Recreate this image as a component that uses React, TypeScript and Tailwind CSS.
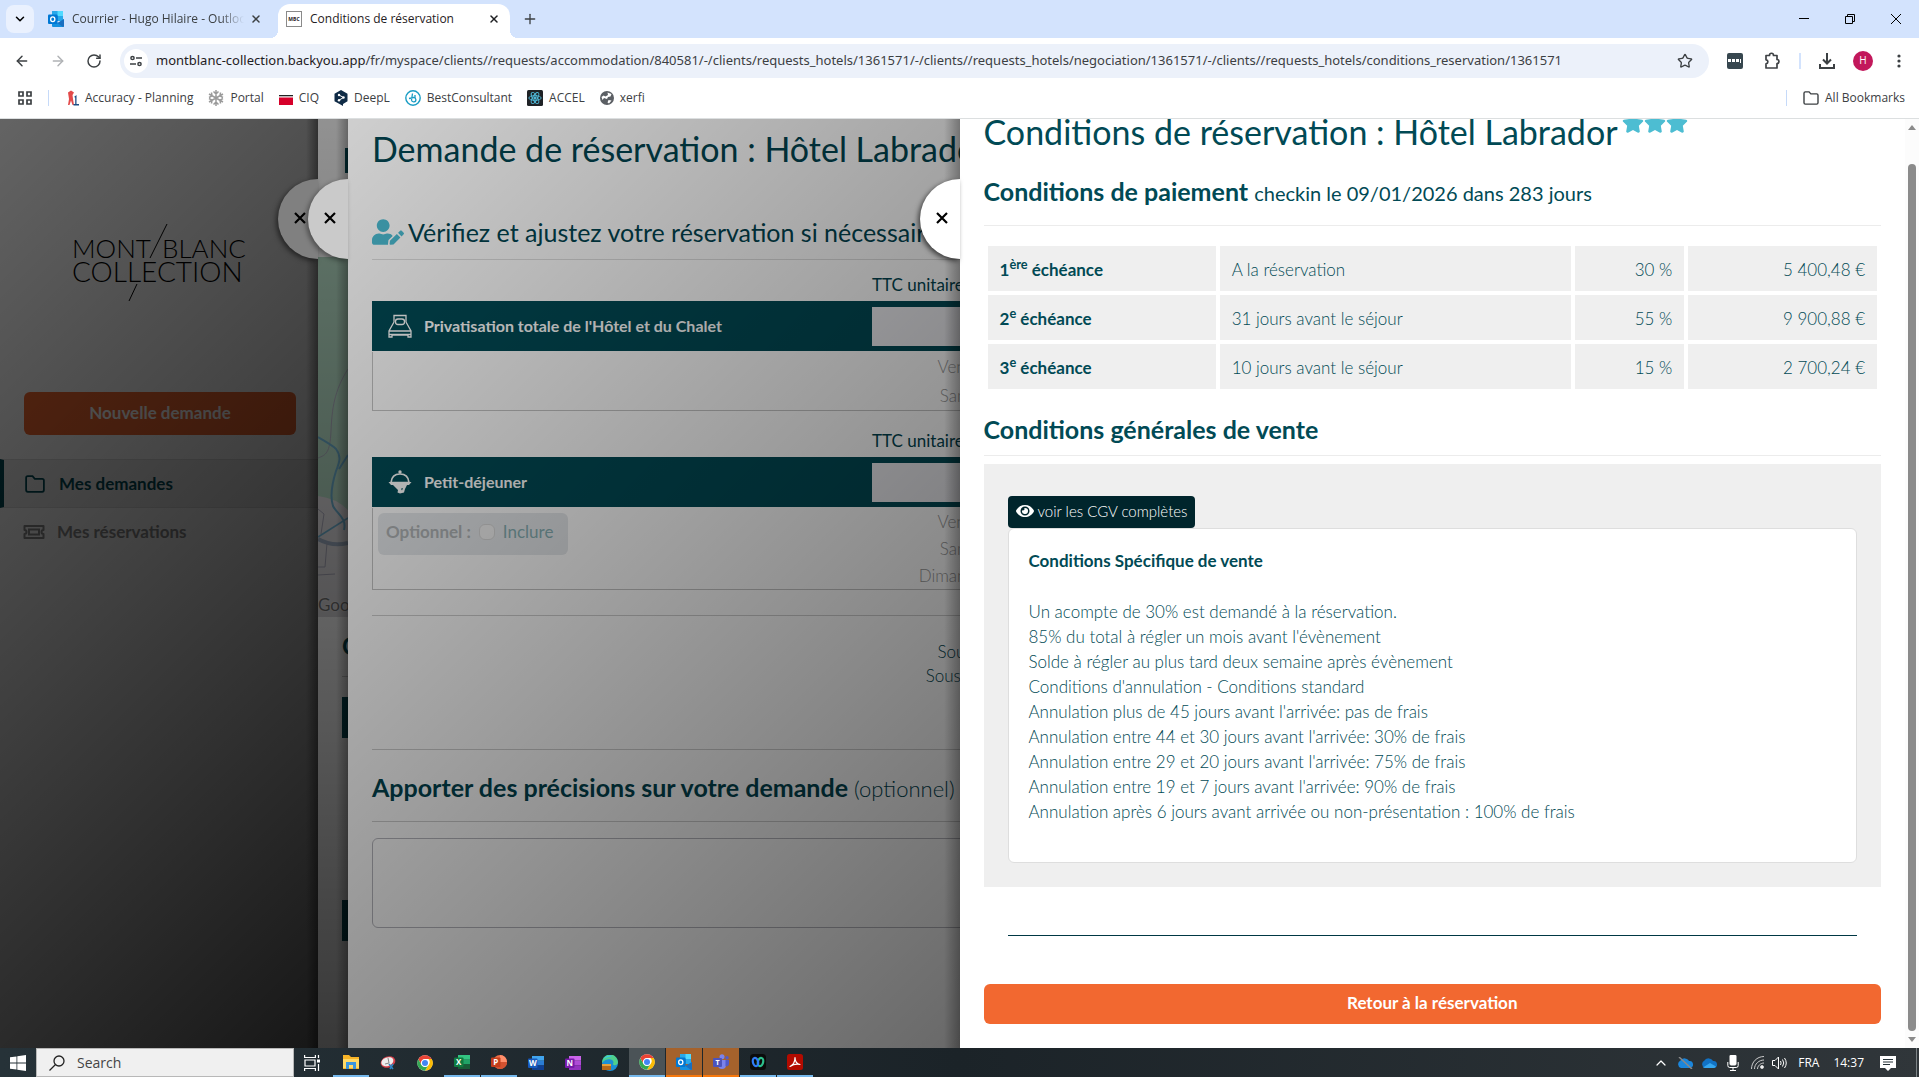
import React from "react";
import { FaEye, FaStar, FaUserEdit } from "react-icons/fa";
import {
  ArrowLeft,
  ArrowRight,
  ChevronDown,
  ChevronUp,
  Plus,
  RotateCw,
  Star,
  X,
} from "lucide-react";

type IconProps = { className?: string };

function OutlookIcon({ className }: IconProps) {
  return (
    <svg viewBox="0 0 16 16" className={className} aria-hidden="true">
      <path d="M4 0h11v10H4z" fill="#28a8ea" />
      <path d="M9.500 0H15v5H9.500z" fill="#50d9ff" />
      <path d="M4 5h5.500v5H4z" fill="#0364b8" />
      <path d="M4 8l6 4 6-4v7a1 1 0 0 1-1 1H5a1 1 0 0 1-1-1z" fill="#1490df" />
      <path d="M16 8v7a1 1 0 0 1-1 1L9.500 12z" fill="#1a6fc0" />
      <rect x="0" y="3.500" width="9.500" height="9.500" rx="1" fill="#0078d4" />
      <ellipse cx="4.750" cy="8.200" rx="2.100" ry="2.400" fill="none" stroke="#fff" strokeWidth="1.300" />
    </svg>
  );
}

function ChromeIcon({ className }: IconProps) {
  return (
    <svg viewBox="0 0 48 48" className={className} aria-hidden="true">
      <circle cx="24" cy="24" r="23" fill="#fff" />
      <path d="M24 12h20A23 23 0 0 0 4 12.500L13.600 30A12 12 0 0 1 24 12z" fill="#ea4335" />
      <path d="M44 12A23 23 0 0 1 24 47l10.400-17A12 12 0 0 0 34 12z" fill="#fbbc05" />
      <path d="M4 12.500A23 23 0 0 0 24 47l10.400-17a12 12 0 0 1-20.800 0z" fill="#34a853" />
      <circle cx="24" cy="24" r="11.500" fill="#fff" />
      <circle cx="24" cy="24" r="9" fill="#4285f4" />
    </svg>
  );
}

function OfficeIcon({
  letter,
  tile,
  light,
  mid,
  dark,
  round,
  className,
}: IconProps & { letter: string; tile: string; light: string; mid: string; dark: string; round?: boolean }) {
  return (
    <svg viewBox="0 0 16 16" className={className} aria-hidden="true">
      {round ? (
        <>
          <circle cx="9" cy="8" r="7" fill={mid} />
          <path d="M9 1a7 7 0 0 1 7 7H9z" fill={light} />
          <path d="M2 8h14a7 7 0 0 1-14 0z" fill={dark} />
        </>
      ) : (
        <>
          <path d="M4 1h12v4.700H4z" fill={light} />
          <path d="M4 5.700h12v4.700H4z" fill={mid} />
          <path d="M4 10.300h12V15H4z" fill={dark} />
        </>
      )}
      <rect x="0" y="3.500" width="9.500" height="9.500" rx="1" fill={tile} />
      <text x="4.750" y="11" textAnchor="middle" fontSize="8" fontWeight="700" fill="#fff" fontFamily="Open Sans">
        {letter}
      </text>
    </svg>
  );
}

function PuzzleIcon({ className }: IconProps) {
  return (
    <svg viewBox="0 0 18 18" className={className} fill="none" stroke="#3f4246" strokeWidth="1.700" aria-hidden="true">
      <path d="M3 3.500h3.500c0-3 4-3 4 0H14v4c2.600 0 2.600 4 0 4v4.500H3v-4.200c2.500-.300 2.500-3.700 0-4z" strokeLinejoin="round" />
    </svg>
  );
}

function FolderIcon({ className }: IconProps) {
  return (
    <svg viewBox="0 0 18 16" className={className} fill="none" stroke="currentColor" strokeWidth="1.600" aria-hidden="true">
      <path d="M1 2.500A1.500 1.500 0 0 1 2.500 1h4.300l2 2.300h6.700A1.500 1.500 0 0 1 17 4.800v8.700a1.500 1.500 0 0 1-1.500 1.500h-13A1.500 1.500 0 0 1 1 13.500z" />
    </svg>
  );
}

function TicketIcon({ className }: IconProps) {
  return (
    <svg viewBox="0 0 22 16" className={className} fill="none" stroke="currentColor" strokeWidth="2" aria-hidden="true">
      <path d="M1.500 2h19v4a2 2 0 0 0 0 4v4h-19v-4a2 2 0 0 0 0-4z" strokeLinejoin="round" />
      <rect x="6" y="5.500" width="10" height="5" />
    </svg>
  );
}

function BedIcon({ className }: IconProps) {
  return (
    <svg viewBox="0 0 24 24" className={className} fill="none" stroke="#fff" strokeWidth="1.300" aria-hidden="true">
      <path d="M6 8V1.500h12V8M6 8L1 17v6h3v-2h16v2h3v-6l-5-9M1.200 17h21.600M1.200 20.500h21.600" />
      <rect x="7.500" y="5" width="9" height="5.500" rx="2.500" />
    </svg>
  );
}

function MealIcon({ className }: IconProps) {
  return (
    <svg viewBox="0 0 24 24" className={className} aria-hidden="true">
      <circle cx="12" cy="2" r="1.700" fill="#fff" />
      <path d="M3 12.500C3.500 7 7 4 12 4s8.500 3 9 8.500z" fill="none" stroke="#fff" strokeWidth="1.700" />
      <path d="M.500 12h23l-2.500 3H3z" fill="#fff" />
      <path d="M5 15h14l-2 4-1 3.500-4 1-2.500-1 .500-2.500z" fill="#fff" />
      <path d="M12 17l1 1.800 2-.800-1 2.500z" fill="#014a55" />
    </svg>
  );
}

const BOOKMARKS: { label: string; icon: React.ReactNode }[] = [
  {
    label: "Accuracy - Planning",
    icon: (
      <svg viewBox="0 0 12 16" className="h-4 w-3" aria-hidden="true">
        <path d="M1 2.500L4 .500 7 2.500 5.500 5 6 9l1 6H5.500L4 10.500 2.500 15H1L2 9z" fill="#e34a4a" />
        <path d="M7 7l2.500-2v9H12v1.500H6.500V14h1.700V7.500z" fill="#1c4f86" />
      </svg>
    ),
  },
  {
    label: "Portal",
    icon: (
      <svg viewBox="0 0 16 16" className="size-4" fill="none" stroke="#9a9a9a" strokeWidth="1.500" aria-hidden="true">
        <path d="M8 0v16M1 4l14 8M1 12l14-8M5.500 1.500L8 4l2.500-2.500M5.500 14.500L8 12l2.500 2.500M1 7.500l3-1.700L3.500 2.500M15 7.500l-3-1.700.500-3.300M1 8.500l3 1.700-.500 3.300M15 8.500l-3 1.700.500 3.300" />
      </svg>
    ),
  },
  {
    label: "CIQ",
    icon: (
      <svg viewBox="0 0 14 16" className="h-4 w-3.5" aria-hidden="true">
        <path d="M0 5h14v1.300H0z" fill="#222" />
        <path d="M0 7.500h14V15H0z" fill="#d6002a" />
      </svg>
    ),
  },
  {
    label: "DeepL",
    icon: (
      <svg viewBox="0 0 14 16" className="h-4 w-3.5" aria-hidden="true">
        <path d="M7 0l6.500 3.700v7.500L9 14v2l-3-1.800L.500 11.200V3.700z" fill="#0f2b46" />
        <path d="M5 5l4.500 2.500L5 10.200" fill="none" stroke="#fff" />
        <circle cx="5" cy="5" r="1.200" fill="#fff" />
        <circle cx="9.500" cy="7.500" r="1.200" fill="#fff" />
        <circle cx="5" cy="10.200" r="1.200" fill="#fff" />
      </svg>
    ),
  },
  {
    label: "BestConsultant",
    icon: (
      <svg viewBox="0 0 16 16" className="size-4" fill="none" stroke="#1a9dc4" aria-hidden="true">
        <circle cx="8" cy="8" r="7.200" strokeWidth="1.400" />
        <path d="M7.500 3.500L6.500 10a2.200 2.200 0 1 0 2-2.500L4 8.500M10 5v3" strokeWidth="1.300" />
      </svg>
    ),
  },
  {
    label: "ACCEL",
    icon: (
      <svg viewBox="0 0 16 16" className="size-4" fill="none" stroke="#4fb8d8" strokeWidth=".9" aria-hidden="true">
        <rect width="16" height="16" rx="1.500" fill="#1f2226" stroke="none" />
        <ellipse cx="8" cy="8" rx="6.200" ry="2.400" />
        <ellipse cx="8" cy="8" rx="6.200" ry="2.400" transform="rotate(60 8 8)" />
        <ellipse cx="8" cy="8" rx="6.200" ry="2.400" transform="rotate(120 8 8)" />
        <circle cx="8" cy="8" r="1.200" fill="#4fb8d8" />
      </svg>
    ),
  },
  {
    label: "xerfi",
    icon: (
      <svg viewBox="0 0 14 14" className="size-3.5" aria-hidden="true">
        <circle cx="7" cy="7" r="7" fill="#5b5f64" />
        <path d="M7.500 1.500l4 1.500-1 2.500-2.500.500-1 2-3-1L2.500 9 1.500 6l2-1.500 2 1L8 4zM8.500 9l3 .500-2.500 3-1.500-1z" fill="#fff" />
      </svg>
    ),
  },
];

function BrowserChrome() {
  return (
    <header className="shrink-0 bg-white font-['Open_Sans',sans-serif] text-xs text-[#3c4043]">
      <div className="flex h-[38px] items-center bg-[#d3e3fd] pl-1.5">
        <button aria-label="Rechercher dans les onglets" className="mr-3.5 flex size-7 items-center justify-center rounded-lg bg-[#eaf1fe] text-black">
          <ChevronDown className="size-3.5" strokeWidth={2.600} />
        </button>
        <div className="flex w-[230px] items-center">
          <OutlookIcon className="size-4 shrink-0" />
          <span className="ml-2 w-[172px] overflow-hidden whitespace-nowrap [mask-image:linear-gradient(to_right,black_86%,transparent)]">
            Courrier - Hugo Hilaire - Outlook
          </span>
          <button aria-label="Fermer l'onglet" className="ml-1.5">
            <X className="size-3" strokeWidth={3} />
          </button>
        </div>
        <div className="relative mt-1 flex h-[34px] w-[232px] items-center rounded-t-xl bg-white pb-1 pl-2 text-[#1f2023]">
          <span className="absolute bottom-0 -left-2 size-2 bg-[radial-gradient(circle_at_0_0,transparent_8px,white_8px)]" />
          <span className="absolute -right-2 bottom-0 size-2 bg-[radial-gradient(circle_at_100%_0,transparent_8px,white_8px)]" />
          <span className="flex size-4 items-center justify-center border border-[#8a8a8a] text-[5px] font-bold">MBC</span>
          <span className="ml-2 flex-1 whitespace-nowrap">Conditions de réservation</span>
          <button aria-label="Fermer l'onglet" className="mr-2.5">
            <X className="size-3" strokeWidth={3} />
          </button>
        </div>
        <button aria-label="Nouvel onglet" className="ml-3">
          <Plus className="size-4" strokeWidth={2} />
        </button>
        <div className="ml-auto flex items-center gap-9 pr-4.5 text-black">
          <button aria-label="Réduire">
            <svg viewBox="0 0 10 10" className="size-2.5" stroke="currentColor"><path d="M0 4.500h10" /></svg>
          </button>
          <button aria-label="Restaurer">
            <svg viewBox="0 0 10 10" className="size-2.5" fill="none" stroke="currentColor"><path d="M.500 2.500h7v7h-7zM2.500 2.500v-2h7v7h-2" /></svg>
          </button>
          <button aria-label="Fermer">
            <svg viewBox="0 0 10 10" className="size-2.5" stroke="currentColor"><path d="M0 0l10 10M10 0L0 10" /></svg>
          </button>
        </div>
      </div>

      <div className="flex h-10 items-center pt-1.5 pl-3.5">
        <button aria-label="Précédent"><ArrowLeft className="size-4" strokeWidth={2.200} /></button>
        <button aria-label="Suivant" className="ml-5 text-[#b0b2b5]"><ArrowRight className="size-4" strokeWidth={2.200} /></button>
        <button aria-label="Actualiser" className="ml-5"><RotateCw className="size-4" strokeWidth={2.200} /></button>
        <div className="ml-4.5 flex h-[34px] min-w-0 flex-1 items-center rounded-full bg-[#ecf1fa] pr-4 pl-1">
          <button aria-label="Informations sur le site" className="flex size-6 items-center justify-center rounded-full bg-white">
            <svg viewBox="0 0 12 12" className="size-3" fill="none" stroke="#3c4043" strokeWidth="1.500"><circle cx="2.500" cy="3" r="1.600" /><path d="M6 3h6M0 9h6" /><circle cx="9.500" cy="9" r="1.600" /></svg>
          </button>
          <p className="ml-2 min-w-0 flex-1 overflow-hidden font-['Noto_Sans',sans-serif] text-[13px] whitespace-nowrap">
            <span className="text-[#1f2023]">montblanc-collection.backyou.app</span>
            /fr/myspace/clients//requests/accommodation/840581/-/clients/requests_hotels/1361571/-/clients//requests_hotels/negociation/1361571/-/clients//requests_hotels/conditions_reservation/1361571
          </p>
          <button aria-label="Ajouter aux favoris"><Star className="size-4" strokeWidth={2} /></button>
        </div>
        <div className="flex items-center pr-4.5 pl-4.5">
          <button aria-label="Mots de passe" className="flex h-4 w-4 items-center justify-center rounded-xs bg-[#37474f]">
            <svg viewBox="0 0 14 4" className="h-1 w-3.5" fill="#fff"><path d="M0 0h3v3H0zM4 0h3v3H4zM8 0h3v3H8zM12 0h1v4h-1z" /></svg>
          </button>
          <button aria-label="Extensions" className="ml-5"><PuzzleIcon className="size-4.5" /></button>
          <span className="mx-4.5 h-4 w-0.5 bg-[#d3e3fd]" />
          <button aria-label="Téléchargements">
            <svg viewBox="0 0 16 16" className="size-4" fill="none" stroke="currentColor" strokeWidth="2"><path d="M8 0v10M4 6.500l4 4 4-4M1 11v4h14v-4" /></svg>
          </button>
          <button aria-label="Profil" className="ml-4.5 flex size-5 items-center justify-center rounded-full bg-[#c2185b] text-[10px] text-white">H</button>
          <button aria-label="Menu" className="ml-6">
            <svg viewBox="0 0 4 14" className="h-3.5 w-1" fill="currentColor"><circle cx="2" cy="2" r="1.600" /><circle cx="2" cy="7" r="1.600" /><circle cx="2" cy="12" r="1.600" /></svg>
          </button>
        </div>
      </div>

      <nav className="flex h-[41px] items-center border-b border-[#dcdfe0] pl-4.5">
        <button aria-label="Applications">
          <svg viewBox="0 0 14 14" className="size-3.5" fill="none" stroke="currentColor" strokeWidth="1.700"><path d="M1 1h4v4H1zM9 1h4v4H9zM1 9h4v4H1zM9 9h4v4H9z" /></svg>
        </button>
        <span className="mr-4.5 ml-4 h-4 w-px bg-[#c6daf9]" />
        <div className="flex gap-[15px]">
          {BOOKMARKS.map((b) => (
            <a key={b.label} href="#" className="flex items-center gap-1.5 whitespace-nowrap">
              {b.icon}
              {b.label}
            </a>
          ))}
        </div>
        <a href="#" className="ml-auto flex items-center gap-1.5 border-l border-[#c6daf9] pr-3.5 pl-4 whitespace-nowrap">
          <FolderIcon className="h-3.5 w-4" />
          All Bookmarks
        </a>
      </nav>
    </header>
  );
}

function PanelHandle({ className }: { className: string }) {
  return (
    <button
      aria-label="Fermer le panneau"
      className={"absolute top-[60px] right-full flex h-20 w-10 items-center justify-end rounded-l-full pr-3 pb-0.5 text-black " + className}
    >
      <svg viewBox="0 0 12 12" className="size-3" stroke="currentColor" strokeWidth="2.200" aria-hidden="true"><path d="M1 1l10 10M11 1L1 11" /></svg>
    </button>
  );
}

function Sidebar() {
  return (
    <aside className="relative w-[318px] shrink-0 overflow-hidden bg-white text-[17px]">
      <svg viewBox="0 0 180 80" className="mt-[103px] ml-[70px] h-20 w-[180px]" role="img" aria-label="Mont/Blanc Collection">
        <g fontFamily="Lato" fontWeight="300" fill="#000">
          <text x="2" y="36" fontSize="26">MONT</text>
          <text x="92" y="36" fontSize="26">BLANC</text>
          <text x="2" y="60" fontSize="28">COLLECTION</text>
        </g>
        <path d="M97 2L80 36M67 62l-8 17" stroke="#000" strokeWidth="1" />
      </svg>
      <button className="mx-6 mt-[90px] block h-[43px] w-[272px] rounded-md bg-[#f26830] pb-0.5 font-bold text-white">Nouvelle demande</button>
      <nav className="mt-6">
        <a href="#" className="flex h-[49px] items-center border-y border-l-4 border-y-[#ddd] border-l-[#014a55] bg-[#ececec] pl-[21px] font-bold text-[#014a55]">
          <FolderIcon className="mr-3.5 h-[18px] w-5" />
          Mes demandes
        </a>
        <a href="#" className="flex h-12 items-center pl-[23px] font-bold text-[#8c8c8c]">
          <TicketIcon className="mr-3 h-4 w-[22px]" />
          Mes réservations
        </a>
      </nav>
      <div className="pointer-events-none absolute inset-0 bg-linear-135 from-black/61 to-black/91" />
      <div className="pointer-events-none absolute inset-y-0 right-0 w-3 bg-linear-to-r from-transparent to-black/40" />
    </aside>
  );
}

function MapPanel() {
  return (
    <section aria-label="Carte" className="relative w-[30px] shrink-0 bg-white">
      <div className="relative flex h-full flex-col items-end overflow-hidden">
        <div className="mt-[29px] h-[25px] w-[3px] bg-[#014a55]" />
        <svg viewBox="0 0 30 360" className="mt-[84px] h-[360px] w-[30px] shrink-0" fill="none" aria-hidden="true">
          <path d="M0 0h30v360H0z" fill="#dcdadd" />
          <path d="M0 0h30v253q-12-12-30-14z" fill="#b0d6c0" />
          <path d="M30 112c-14 22-16 40-17 62s-5 24-13 27" stroke="#a8a8b8" />
          <path d="M0 180c8 5 14 8 18 12 6 8 3 14 0 22-5 16-6 26-3 35 4 8 14 12 11 24M30 198l-9 14" stroke="#6aaccb" strokeWidth="2" />
          <path d="M0 280l30-19" stroke="#6aaccb" strokeWidth="1.500" />
          <path d="M0 282q14 8 30 4" stroke="#9aa9bd" strokeWidth="4" />
          <path d="M0 252l6 5-3 20M9 286l-2 24H0M0 318l17-1" stroke="#a5a5b5" />
        </svg>
        <span className="-mt-6 w-full text-[17px] leading-6 whitespace-nowrap text-[#777] [text-shadow:0_0_2px_#fff]">Google</span>
        <span className="mt-[13px] w-1.5 overflow-hidden text-2xl leading-8 font-bold text-[#014a55]">C</span>
        <div className="mt-3.5 h-px w-1.5 bg-[#ccc]" />
        <div className="mt-5 h-[41px] w-1.5 bg-[#014a55]" />
        <div className="mt-[162px] h-[41px] w-1.5 bg-[#014a55]" />
      </div>
      <div className="pointer-events-none absolute inset-0 bg-linear-to-b from-black/43 to-black/78" />
      <div className="pointer-events-none absolute inset-y-0 right-0 w-3 bg-linear-to-r from-transparent to-black/30" />
      <PanelHandle className="bg-[#808080] shadow-[-2px_2px_5px_rgba(0,0,0,0.5)]" />
    </section>
  );
}

function ServiceBlock({
  title,
  icon,
  days,
  rowClass,
  children,
}: {
  title: string;
  icon: React.ReactNode;
  days: string[];
  rowClass: string;
  children?: React.ReactNode;
}) {
  return (
    <div>
      <div className="pl-[500px] leading-[25px]">TTC unitaire</div>
      <div className="mt-1 flex h-[50px] items-center bg-[#014a55] pl-4 text-base font-bold text-white">
        {icon}
        <span className="ml-3 w-[448px]">{title}</span>
        <input aria-label={"Prix TTC unitaire " + title} className="h-[39px] w-[200px] bg-[#ececf0]" />
      </div>
      <div className="mt-px flex justify-between border-b border-l border-[#c4c4c4]">
        <div className="flex-1">{children}</div>
        <div className="mr-[105px] text-right font-light text-[#999]">
          {days.map((d) => (
            <div key={d} className={rowClass}>{d}</div>
          ))}
        </div>
      </div>
    </div>
  );
}

function RequestPanel() {
  return (
    <section className="relative min-w-0 flex-1 bg-white">
      <div className="h-full overflow-hidden pt-2.5 pl-6 text-[17px] text-[#014450]">
        <div className="w-[750px]">
          <h1 className="text-[34px] leading-10 whitespace-nowrap">Demande de réservation : Hôtel Labrador</h1>
          <h2 className="mt-[47px] flex items-center gap-1 border-b border-[#dedede] pb-[11px] text-[25px] leading-8 whitespace-nowrap">
            <FaUserEdit className="size-8 text-[#4bbad0]" />
            Vérifiez et ajustez votre réservation si nécessaire
          </h2>
          <div className="mt-3 flex flex-col gap-[17px]">
            <ServiceBlock title="Privatisation totale de l'Hôtel et du Chalet" icon={<BedIcon className="size-6" />} days={["Vendredi 9", "Samedi 10"]} rowClass="h-[29px] leading-[29px]" />
            <ServiceBlock title="Petit-déjeuner" icon={<MealIcon className="size-6" />} days={["Vendredi 9", "Samedi 10", "Dimanche 11"]} rowClass="h-[27px] leading-[27px]">
              <label className="mt-[5px] ml-[5px] flex h-[42px] w-[190px] items-center rounded-md bg-[#e6e9ec] pb-1 pl-2 text-[#86b0b4]">
                <span className="font-bold text-[#b0b4b6]">Optionnel :</span>
                <input type="checkbox" className="mx-2 size-4 appearance-none rounded-md border border-[#d8d8d8] bg-[#f4f4f4]" />
                Inclure
              </label>
            </ServiceBlock>
          </div>
          <div className="mt-[25px] border-t border-[#cfcfcf] pt-6 pr-[83px] pb-[61px] text-right leading-6 font-light">
            <div>Sous-total HT</div>
            <div>Sous-total T.T.C</div>
          </div>
          <h2 className="border-y border-[#cfcfcf] pt-[21px] pb-4 text-[25px] leading-8 font-bold whitespace-nowrap">
            <label htmlFor="precisions">
              Apporter des précisions sur votre demande <span className="text-[22px] font-light">(optionnel)</span>
            </label>
          </h2>
          <textarea id="precisions" className="mt-4 block h-[90px] w-full resize-none rounded-md border border-[#b9b9c0] bg-transparent" />
        </div>
      </div>
      <div className="pointer-events-none absolute inset-0 bg-linear-135 from-black/19 to-black/59" />
      <div className="pointer-events-none absolute inset-y-0 right-0 w-4 bg-linear-to-r from-transparent to-black/30" />
      <PanelHandle className="bg-[#cacaca] shadow-[-2px_2px_5px_rgba(0,0,0,0.4)]" />
    </section>
  );
}

const PAYMENTS = [
  { rank: "1", suffix: "ère", when: "A la réservation", share: "30 %", amount: "5 400,48 €" },
  { rank: "2", suffix: "e", when: "31 jours avant le séjour", share: "55 %", amount: "9 900,88 €" },
  { rank: "3", suffix: "e", when: "10 jours avant le séjour", share: "15 %", amount: "2 700,24 €" },
];

const TERMS = [
  "Un acompte de 30% est demandé à la réservation.",
  "85% du total à régler un mois avant l'évènement",
  "Solde à régler au plus tard deux semaine après évènement",
  "Conditions d'annulation - Conditions standard",
  "Annulation plus de 45 jours avant l'arrivée: pas de frais",
  "Annulation entre 44 et 30 jours avant l'arrivée: 30% de frais",
  "Annulation entre 29 et 20 jours avant l'arrivée: 75% de frais",
  "Annulation entre 19 et 7 jours avant l'arrivée: 90% de frais",
  "Annulation après 6 jours avant arrivée ou non-présentation : 100% de frais",
];

function ConditionsDrawer() {
  return (
    <section className="relative flex w-1/2 shrink-0 bg-white">
      <PanelHandle className="bg-white shadow-[-2px_2px_5px_rgba(0,0,0,0.6)]" />
      <div className="h-full min-w-0 flex-1 overflow-hidden px-6 text-[17px] text-[#014a55]">
        <h1 className="flex h-[26px] items-center pb-0.5 text-[34px] whitespace-nowrap">
          Conditions de réservation : Hôtel Labrador
          <span className="mb-4 ml-1 flex text-[#4dbdd2]" role="img" aria-label="3 étoiles">
            <FaStar className="size-[22px]" />
            <FaStar className="size-[22px]" />
            <FaStar className="size-[22px]" />
          </span>
        </h1>
        <h2 className="mt-[30px] border-b border-[#ececec] pb-[18px] text-[25px] leading-8 font-bold">
          Conditions de paiement <span className="text-xl font-normal">checkin le 09/01/2026 dans 283 jours</span>
        </h2>
        <table className="mt-4 w-full table-fixed border-separate border-spacing-1">
          <tbody>
            {PAYMENTS.map((p) => (
              <tr key={p.rank} className="h-[45px] *:bg-[#efefef] *:px-3 *:pt-0.5">
                <th scope="row" className="w-[26%] text-left font-bold">
                  {p.rank}
                  <sup>{p.suffix}</sup> échéance
                </th>
                <td className="w-2/5 font-light">{p.when}</td>
                <td className="w-1/8 text-right font-light">{p.share}</td>
                <td className="text-right font-light">{p.amount}</td>
              </tr>
            ))}
          </tbody>
        </table>
        <h2 className="mt-5 border-b border-[#ececec] pb-2.5 text-[25px] leading-8 font-bold">Conditions générales de vente</h2>
        <div className="mt-2 bg-[#efefef] px-6 pt-8 pb-6">
          <button className="flex h-8 items-center gap-1 rounded bg-[#00252c] px-2 pb-0.5 text-[15px] font-light whitespace-nowrap text-white">
            <FaEye className="size-[18px]" />
            voir les CGV complètes
          </button>
          <div className="rounded-md border border-[#dedede] bg-white px-5 pt-[19px] pb-[38px] leading-[25px] font-light">
            <p className="mb-[26px] font-bold">Conditions Spécifique de vente</p>
            {TERMS.map((t) => (
              <p key={t}>{t}</p>
            ))}
          </div>
        </div>
        <hr className="mx-6 mt-12 border-[#003844]" />
        <button className="mt-12 h-10 w-full rounded-md bg-[#f26830] pb-0.5 font-bold text-white">Retour à la réservation</button>
      </div>
      <div className="flex w-3.5 shrink-0 flex-col items-center bg-[#fcfcfc] py-1.5" aria-hidden="true">
        <svg viewBox="0 0 8 5" className="h-[5px] w-2" fill="#8b8b8b"><path d="M4 0l4 5H0z" /></svg>
        <div className="mt-[34px] mb-1.5 w-2 flex-1 rounded-full bg-[#8b8b8b]" />
        <svg viewBox="0 0 8 5" className="h-[5px] w-2" fill="#8b8b8b"><path d="M4 5L0 0h8z" /></svg>
      </div>
    </section>
  );
}

const TASKS: { name: string; tile: string; icon: React.ReactNode }[] = [
  {
    name: "Explorateur",
    tile: "border-b-2 border-[#76b9ed]",
    icon: (
      <svg viewBox="0 0 16 16" className="size-4"><path d="M0 1h6l2 2h8v12H0z" fill="#f8b427" /><path d="M0 5h16v9H0z" fill="#ffd965" /><path d="M3 8h10v7h-3v-4H6v4H3z" fill="#3a95dd" /></svg>
    ),
  },
  {
    name: "Capture",
    tile: "",
    icon: (
      <svg viewBox="0 0 16 16" className="size-4"><ellipse cx="8" cy="7" rx="7.500" ry="5.500" fill="#d8404a" transform="rotate(-20 8 7)" /><ellipse cx="7.500" cy="6.500" rx="6.200" ry="4.300" fill="#eee" transform="rotate(-20 8 7)" /><path d="M8 3l1 5-4 1" stroke="#888" fill="none" /><path d="M9 9l4 5M13 9l-3 5" stroke="#2c86c7" strokeWidth="1.500" /></svg>
    ),
  },
  { name: "Chrome", tile: "", icon: <ChromeIcon className="size-4" /> },
  { name: "Excel", tile: "border-b-2 border-[#76b9ed]", icon: <OfficeIcon className="size-4" letter="X" tile="#107c41" light="#33c481" mid="#21a366" dark="#185c37" /> },
  { name: "PowerPoint", tile: "border-b-2 border-[#76b9ed]", icon: <OfficeIcon className="size-4" round letter="P" tile="#c43e1c" light="#ff8f6b" mid="#ed6c47" dark="#d35230" /> },
  { name: "Word", tile: "", icon: <OfficeIcon className="size-4" letter="W" tile="#185abd" light="#41a5ee" mid="#2b7cd3" dark="#103f91" /> },
  { name: "OneNote", tile: "", icon: <OfficeIcon className="size-4" letter="N" tile="#7719aa" light="#ca64ea" mid="#ae4bd5" dark="#9332bf" /> },
  {
    name: "Edge",
    tile: "",
    icon: (
      <svg viewBox="0 0 16 16" className="size-4"><circle cx="8" cy="8" r="8" fill="#1b8fd6" /><path d="M0 8a8 8 0 0 1 16-1c0 4-5 4-5 2 0-1 1-1 0-3S4 3 0 8z" fill="#4fd08c" /><path d="M1 5a8 8 0 0 1 10-4c-3 1-8 1-10 4z" fill="#3cc5e8" /><rect x="0" y="9" width="9" height="6" fill="#b5691a" /><path d="M0 9h9v2H0z" fill="#e6a13c" /></svg>
    ),
  },
  { name: "Chrome (actif)", tile: "bg-[#4b5357] border-b-2 border-[#76b9ed]", icon: <ChromeIcon className="size-4" /> },
  { name: "Outlook", tile: "bg-[#a5622c] border-b-2 border-[#f7780c]", icon: <OutlookIcon className="size-4" /> },
  {
    name: "Teams",
    tile: "bg-[#a5622c] border-b-2 border-[#f7780c]",
    icon: (
      <svg viewBox="0 0 16 16" className="size-4"><circle cx="9" cy="2.800" r="2.500" fill="#7b83eb" /><circle cx="14" cy="3.800" r="1.700" fill="#5059c9" /><path d="M5 6h8v5a4 4 0 0 1-8 0z" fill="#7b83eb" /><path d="M12.500 6H16v4a2.500 2.500 0 0 1-3.500 2z" fill="#5059c9" /><rect y="4" width="9" height="9" rx="1" fill="#4b53bc" /><text x="4.500" y="11" textAnchor="middle" fontSize="7" fontWeight="700" fill="#fff" fontFamily="Open Sans">T</text></svg>
    ),
  },
  {
    name: "Webex",
    tile: "border-b-2 border-[#76b9ed]",
    icon: (
      <svg viewBox="0 0 16 16" className="size-4" fill="none" strokeWidth="2.200"><rect width="16" height="16" rx="3.500" fill="#0b0b0b" /><ellipse cx="10.500" cy="8" rx="2.600" ry="4.200" stroke="#2cc08c" transform="rotate(15 10.500 8)" /><ellipse cx="5.500" cy="8" rx="2.600" ry="4.200" stroke="#2f7df6" transform="rotate(-15 5.500 8)" /></svg>
    ),
  },
  {
    name: "Acrobat",
    tile: "border-b-2 border-[#76b9ed]",
    icon: (
      <svg viewBox="0 0 16 16" className="size-4"><rect width="16" height="16" rx="2.500" fill="#b30b00" /><path d="M3 12.500c3-1.500 5-5.500 5-9 0 4 2.500 6.500 5 7-3.500-.800-7 0-10 2z" fill="none" stroke="#fff" strokeWidth="1.200" strokeLinejoin="round" /></svg>
    ),
  },
];

function Taskbar() {
  return (
    <footer className="flex h-[29px] shrink-0 items-stretch bg-linear-to-r from-[#263238] via-[#1b2328] to-[#30363a] font-['Open_Sans',sans-serif] text-xs text-white">
      <button aria-label="Démarrer" className="flex w-9 items-center justify-center">
        <svg viewBox="0 0 16 16" className="size-4" fill="#fff"><path d="M0 2.300L6.500 1.400v6.100H0zM7.300 1.300L16 0v7.500H7.300zM0 8.400h6.500v6.200L0 13.700zM7.300 8.400H16V16l-8.700-1.300z" /></svg>
      </button>
      <label className="flex w-[258px] items-center border border-[#b8b8b8] bg-[#f0f0f0] pl-3 text-[#333]">
        <svg viewBox="0 0 16 16" className="size-4" fill="none" stroke="#222" strokeWidth="1.300"><circle cx="10" cy="6" r="5" /><path d="M6.500 9.500L.500 15.500" /></svg>
        <input aria-label="Search" placeholder="Search" className="ml-3 w-40 bg-transparent text-sm placeholder:text-[#444]" />
      </label>
      <button aria-label="Affichage des tâches" className="flex w-9 items-center justify-center">
        <svg viewBox="0 0 16 16" className="size-4" fill="none" stroke="#fff" strokeWidth="1.200"><path d="M.600 0v2.500h10.800V0M1 5h10v6H1zM.600 16v-2.500h10.800V16M14.500 0v3M14.500 9v7" /><path d="M13 4.500h3v3h-3z" fill="#fff" stroke="none" /></svg>
      </button>
      <div className="ml-[3px] flex gap-px">
        {TASKS.map((t) => (
          <button key={t.name} aria-label={t.name} className={"flex w-9 items-center justify-center " + t.tile}>
            {t.icon}
          </button>
        ))}
      </div>
      <div className="ml-auto flex items-center">
        <button aria-label="Icônes cachées"><ChevronUp className="size-4" strokeWidth={1.800} /></button>
        <svg viewBox="0 0 16 12" className="ml-2 h-3 w-4"><path d="M4 11a4 4 0 0 1-.500-7.500A5 5 0 0 1 12 4a3.500 3.500 0 0 1 1 7z" fill="#1b86dc" /><path d="M2 0l13 12" stroke="#888" strokeWidth="1.500" /></svg>
        <svg viewBox="0 0 16 12" className="ml-2 h-3 w-4"><path d="M4 11a4 4 0 0 1-.500-7.500A5 5 0 0 1 12 4a3.500 3.500 0 0 1 1 7z" fill="#1272c4" /><path d="M2 10.500L9 6l6 3.500a3 3 0 0 1-2 1.500H4z" fill="#35a7f0" /></svg>
        <svg viewBox="0 0 12 16" className="ml-2.5 h-4 w-3" fill="none" stroke="#fff"><rect x="3" y="0" width="6" height="10" rx="1" fill="#fff" /><path d="M.800 7v3.500a2 2 0 0 0 2 2h6.400a2 2 0 0 0 2-2V7M6 12.500v3M3 15.500h6" /></svg>
        <svg viewBox="0 0 13 13" className="ml-3 size-[13px]" fill="none" stroke="#ccc"><path d="M.500 13C.500 6 6 .500 13 .500M3.500 13c0-5 4.500-9 9.500-9M6.500 13c0-3 3-6 6.500-6" /><circle cx="11" cy="11" r="1.500" fill="#fff" /></svg>
        <svg viewBox="0 0 16 14" className="ml-2 h-3.5 w-4" fill="none" stroke="#fff"><path d="M.500 4.500H3L6.500 1v12L3 9.500H.500zM8.500 5q1.200 2 0 4M10.500 3.500q2.500 3.500 0 7M12.500 2q3.500 5 0 10" /></svg>
        <span className="ml-2.5">FRA</span>
        <time className="ml-3.5">14:37</time>
        <button aria-label="Notifications" className="mr-5 ml-4">
          <svg viewBox="0 0 16 16" className="size-4"><path d="M0 1h16v12h-5l-3 3-3-3H0z" fill="#fff" /><path d="M3 4.500h10M3 7h10M3 9.500h7" stroke="#263238" /></svg>
        </button>
        <span className="mr-0.5 h-full w-px bg-[#7d8487]" />
      </div>
    </footer>
  );
}

export default function App() {
  return (
    <div className="flex h-screen flex-col overflow-hidden bg-white font-['Lato',sans-serif]">
      <BrowserChrome />
      <main className="flex min-h-0 flex-1">
        <Sidebar />
        <MapPanel />
        <RequestPanel />
        <ConditionsDrawer />
      </main>
      <Taskbar />
    </div>
  );
}
